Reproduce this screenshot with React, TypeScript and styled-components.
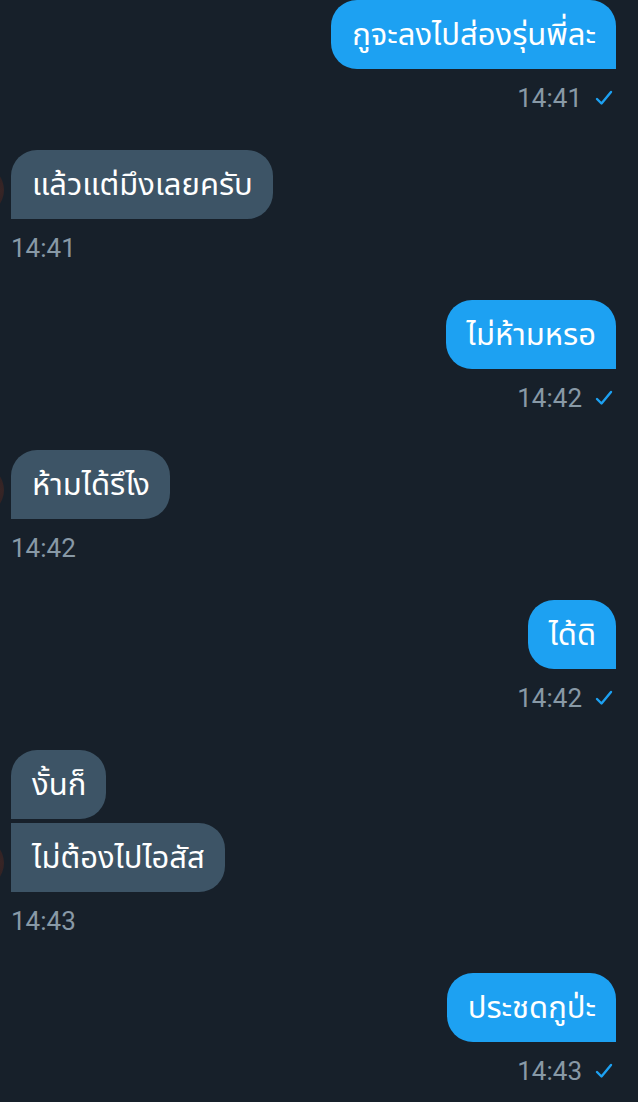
import React from 'react'
import styled, { createGlobalStyle } from 'styled-components'

const GlobalStyle = createGlobalStyle`
    html, body {
        margin: 0;
        padding: 0;
        background-color: #17202a;
    }
`

const Page = styled.div`
    width: 638px;
    height: 1102px;
    overflow: hidden;
    background-color: #17202a;
    font-family: Roboto, 'Noto Sans', 'Noto Sans Thai', sans-serif;
    display: flex;
    flex-direction: column;
`

const Group = styled.div<{ $mine?: boolean }>`
    display: flex;
    flex-direction: column;
    align-items: ${p => (p.$mine ? 'flex-end' : 'flex-start')};
    padding: ${p => (p.$mine ? '0 22px 0 0' : '0 0 0 11px')};
    height: 150px;
    flex-shrink: 0;
`

const Row = styled.div`
    display: flex;
    align-items: flex-end;
    position: relative;
`

const Avatar = styled.div`
    position: absolute;
    left: -57px;
    bottom: 4px;
    width: 50px;
    height: 50px;
    border-radius: 50%;
    background: radial-gradient(circle at 85% 50%, #3a2626 0%, #251d21 70%);
`

const Stack = styled.div`
    display: flex;
    flex-direction: column;
    gap: 4px;
`

const Bubble = styled.div<{ $mine?: boolean; $joinTop?: boolean }>`
    box-sizing: border-box;
    height: 69px;
    display: flex;
    align-items: center;
    padding: 2px 20px 0 21px;
    font-size: 31px;
    color: #ffffff;
    white-space: nowrap;
    background-color: ${p => (p.$mine ? '#1da1f2' : '#3d5466')};
    border-radius: ${p =>
        p.$mine
            ? '26px 26px 0 26px'
            : p.$joinTop
            ? '0 26px 26px 0'
            : '26px 26px 26px 0'};
    align-self: flex-start;
`

const Meta = styled.div<{ $mine?: boolean }>`
    display: flex;
    align-items: center;
    gap: 13px;
    margin-top: 15px;
    padding-right: ${p => (p.$mine ? '3px' : '0')};
    font-size: 26px;
    color: #8899a6;
    line-height: 28px;
`

const Check = () => (
    <svg width="18" height="16" viewBox="0 0 18 16" fill="none">
        <path d="M2 9 L6.5 13.5 L16 2" stroke="#1da1f2" strokeWidth="2.4" strokeLinecap="round" strokeLinejoin="round" />
    </svg>
)

type Msg = { mine: boolean; texts: string[]; time: string }

const messages: Msg[] = [
    { mine: true, texts: ['กูจะลงไปส่องรุ่นพี่ละ'], time: '14:41' },
    { mine: false, texts: ['แล้วแต่มึงเลยครับ'], time: '14:41' },
    { mine: true, texts: ['ไม่ห้ามหรอ'], time: '14:42' },
    { mine: false, texts: ['ห้ามได้รึไง'], time: '14:42' },
    { mine: true, texts: ['ได้ดิ'], time: '14:42' },
    { mine: false, texts: ['งั้นก็', 'ไม่ต้องไปไอสัส'], time: '14:43' },
    { mine: true, texts: ['ประชดกูป่ะ'], time: '14:43' },
]

export default function App() {
    return (
        <Page>
            <GlobalStyle />
            {messages.map((m, i) => (
                <Group key={i} $mine={m.mine} style={m.texts.length > 1 ? { height: 223 } : undefined}>
                    <Row>
                        {!m.mine && <Avatar />}
                        <Stack>
                            {m.texts.map((t, j) => (
                                <Bubble key={j} $mine={m.mine} $joinTop={j > 0}>
                                    {t}
                                </Bubble>
                            ))}
                        </Stack>
                    </Row>
                    <Meta $mine={m.mine}>
                        {m.time}
                        {m.mine && <Check />}
                    </Meta>
                </Group>
            ))}
        </Page>
    )
}
